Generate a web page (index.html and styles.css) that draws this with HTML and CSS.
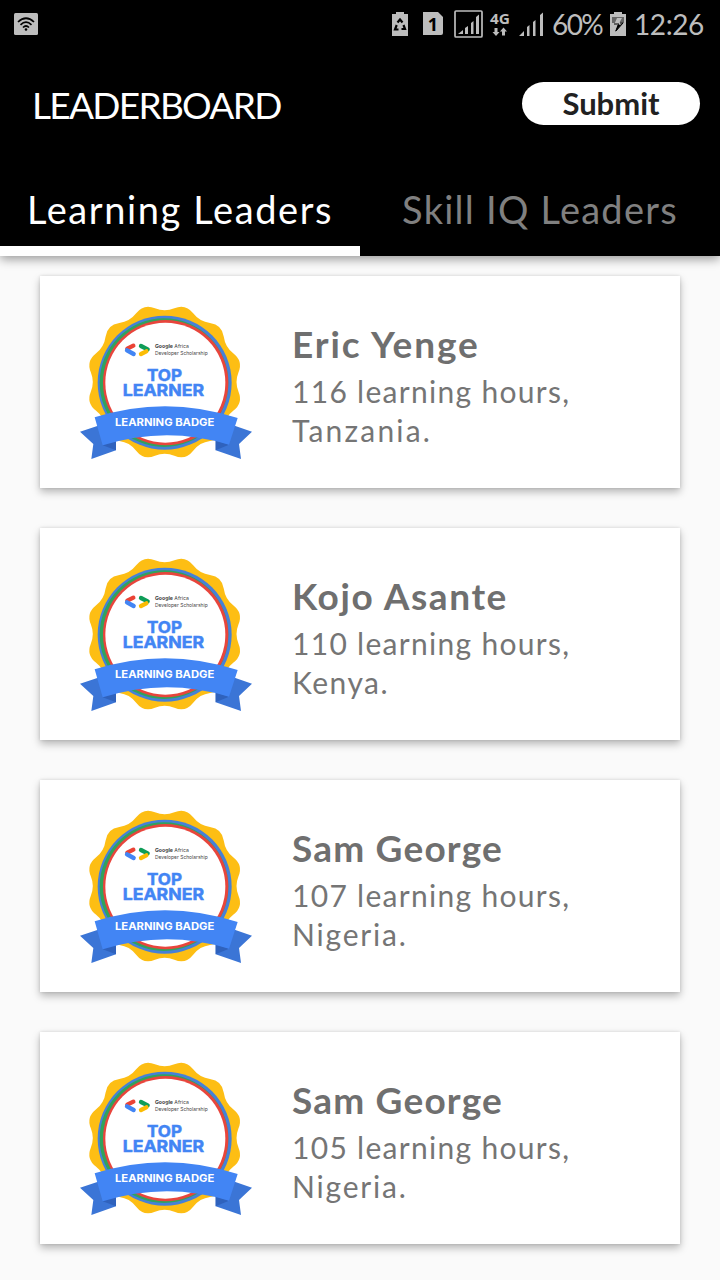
FILE: index.html
```html
<!DOCTYPE html>
<html lang="en">
<head>
<meta charset="utf-8">
<title>Leaderboard</title>
<link rel="stylesheet" href="styles.css">
</head>
<body>
<svg class="defs" aria-hidden="true">
  <symbol id="badge" viewBox="0 0 570 525">
    <path fill="#fdbe14" stroke="#fdbe14" stroke-width="9" stroke-linejoin="round" transform="translate(284 261)" d="M30.8-217.4Q61.6-230 82-203.7Q102.4-177.3 135.4-172.9Q168.4-168.4 172.9-135.4Q177.3-102.4 203.7-82Q230-61.6 217.4-30.8Q204.7 0 217.4 30.8Q230 61.6 203.7 82Q177.3 102.4 172.9 135.4Q168.4 168.4 135.4 172.9Q102.4 177.3 82 203.7Q61.6 230 30.8 217.4Q0 204.7-30.8 217.4Q-61.6 230-82 203.7Q-102.4 177.3-135.4 172.9Q-168.4 168.4-172.9 135.4Q-177.3 102.4-203.7 82Q-230 61.6-217.4 30.8Q-204.7 0-217.4-30.8Q-230-61.6-203.7-82Q-177.3-102.4-172.9-135.4Q-168.4-168.4-135.4-172.9Q-102.4-177.3-82-203.7Q-61.6-230-30.8-217.4Q0-204.7 30.8-217.4Z"/>
    <circle cx="284" cy="263" r="201" fill="#4680d8"/>
    <circle cx="282" cy="263" r="193" fill="#31a35c"/>
    <circle cx="287" cy="263" r="188" fill="#e8453c"/>
    <circle cx="286" cy="263" r="180" fill="#fff"/>
    <g fill="none" stroke-width="13" stroke-linecap="round">
      <path stroke="#ea4335" d="M172 161L190 152"/>
      <path stroke="#4285f4" d="M171 166L191 177"/>
      <path stroke="#0f9d58" d="M213 153L233 163"/>
      <path stroke="#fbbc04" d="M229 169L213 177"/>
    </g>
    <g fill="#444" font-family="Inter, sans-serif" font-size="15">
      <text x="255" y="160" textLength="102" lengthAdjust="spacingAndGlyphs"><tspan font-weight="700">Google</tspan> Africa</text>
      <text x="255" y="179" textLength="158" lengthAdjust="spacingAndGlyphs">Developer Scholarship</text>
    </g>
    <g fill="#4285f4" stroke="#4285f4" stroke-width="1.5" font-family="Inter, sans-serif" font-weight="700">
      <text x="231" y="259" font-size="48" textLength="105" lengthAdjust="spacingAndGlyphs">TOP</text>
      <text x="158" y="303" font-size="49" textLength="244" lengthAdjust="spacingAndGlyphs">LEARNER</text>
    </g>
    <path fill="#3b75d6" d="M30 410L84 392L138 436V466L64 492L70 447ZM546 410L494 392L437 436V466L513 492L507 447Z"/>
    <path fill="#2f62bd" d="M98 451L138 436V466ZM477 449L437 436V466Z"/>
    <path fill="#4285f4" d="M74 367Q288 299 503 369L477 449Q288 391 98 451Z"/>
    <text x="135" y="393" fill="#fff" font-family="Inter, sans-serif" font-weight="700" font-size="31" textLength="298" lengthAdjust="spacingAndGlyphs">LEARNING BADGE</text>
  </symbol>
</svg>

<header class="header">
  <div class="status">
    <svg class="status-wifi" width="24" height="22" viewBox="0 0 24 22"><rect width="24" height="22" rx="1.5" fill="#bdbdbd"/><g fill="none" stroke="#000" stroke-width="1.700"><path d="M4 9Q12 1.500 20 9M6.500 11.800Q12 6.500 17.500 11.800M9 14.500Q12 11.500 15 14.500"/></g><circle cx="12" cy="16.500" r="1.300"/></svg>
    <div class="status-right">
      <svg width="172" height="34" viewBox="388 8 172 34" fill="#bdbdbd">
        <path d="M392 14h4v-2h8v2h4v22h-16z"/>
        <g fill="none" stroke="#000" stroke-width="2.200"><path d="M397.500 22.500L400 19.500L402.500 22.500M403.500 25L405 29H401.500M398.500 29.500H395L396.700 25"/></g>
        <path d="M423 12h15l5 5v16q0 2-2 2h-18z"/>
        <text x="433" y="30.500" text-anchor="middle" font-family="Open Sans, sans-serif" font-weight="700" font-size="18" fill="#000">1</text>
        <rect x="455" y="11" width="27" height="26" rx="1" fill="none" stroke="#bdbdbd" stroke-width="1.700"/>
        <path d="M458 34l5-4v4zM465 28l3-2v8h-3zM471 23l2.500-2v13H471zM476 17l3-2.500V34h-3z"/>
        <text x="490" y="24" font-family="Open Sans, sans-serif" font-weight="700" font-size="14" textLength="20" lengthAdjust="spacingAndGlyphs">4G</text>
        <path d="M494.500 28h3v4h2l-3.500 4-3.500-4h2zM502 35.500h3v-4h2l-3.500-4-3.500 4h2z"/>
        <path d="M519 36l5-5v5zM527 27l2.500-2v11H527zM533 22l2.500-2v16H533zM540 15l3-2.500V36h-3z"/>
      </svg>
      <span class="status-percent">60%</span>
      <svg class="status-charge" width="16" height="24" viewBox="0 0 16 24"><path fill="#bdbdbd" d="M0 2h4V0h8v2h4v22H0z"/><path fill="#666" d="M2 5h12v6H2z"/><path d="M3.500 13H7.500l-2.500 7L13 11H9.500V13z" fill="#000"/><path fill="#bdbdbd" d="M7 6h5l-2.500 4.500H13L10 13H4z"/><path d="M4 12h5l-3 7 7-8h-3" fill="none" stroke="#000"/></svg>
      <span class="status-time">12:26</span>
    </div>
  </div>
  <div class="toolbar">
    <h1 class="title">LEADERBOARD</h1>
    <button class="submit">Submit</button>
  </div>
  <nav class="tabs">
    <a class="tab tab-active"><span class="tab-learning">Learning Leaders</span></a>
    <a class="tab"><span class="tab-skill">Skill IQ Leaders</span></a>
  </nav>
</header>

<main class="list">
  <article class="card">
    <svg class="badge" width="190" height="175"><use href="#badge"/></svg>
    <div class="info">
      <h2 class="name eric">Eric Yenge</h2>
      <p class="detail hours">116 learning hours,</p>
      <p class="detail tanzania">Tanzania.</p>
    </div>
  </article>
  <article class="card">
    <svg class="badge" width="190" height="175"><use href="#badge"/></svg>
    <div class="info">
      <h2 class="name kojo">Kojo Asante</h2>
      <p class="detail hours">110 learning hours,</p>
      <p class="detail kenya">Kenya.</p>
    </div>
  </article>
  <article class="card">
    <svg class="badge" width="190" height="175"><use href="#badge"/></svg>
    <div class="info">
      <h2 class="name sam">Sam George</h2>
      <p class="detail hours">107 learning hours,</p>
      <p class="detail nigeria">Nigeria.</p>
    </div>
  </article>
  <article class="card">
    <svg class="badge" width="190" height="175"><use href="#badge"/></svg>
    <div class="info">
      <h2 class="name sam">Sam George</h2>
      <p class="detail hours">105 learning hours,</p>
      <p class="detail nigeria">Nigeria.</p>
    </div>
  </article>
</main>
</body>
</html>
```
FILE: styles.css
```css
* { box-sizing: border-box; }
body {
  margin: 0;
  width: 720px;
  height: 1280px;
  overflow: hidden;
  background: #fafafa;
  font-family: Lato, "Open Sans", sans-serif;
}
h1, h2, p { margin: 0; white-space: nowrap; }
.defs { display: block; width: 0; height: 0; }

.header {
  height: 256px;
  background: #000;
  box-shadow: 0 3px 10px rgba(0, 0, 0, .4);
}
.status {
  display: flex;
  justify-content: space-between;
  height: 50px;
  padding: 8px 15px 0 14px;
  color: #bdbdbd;
}
.status-wifi { margin-top: 5px; }
.status-right { display: flex; line-height: 33px; font-size: 28px; white-space: nowrap; }
.status-percent { width: 50px; margin-left: -8px; letter-spacing: -1.6px; }
.status-charge { margin: 4px 8px 0 8px; }
.status-time { width: 71px; letter-spacing: -.4px; }

.toolbar {
  display: flex;
  justify-content: space-between;
  height: 120px;
  padding: 31px 20px 0 32px;
}
.title {
  color: #fff;
  font-size: 37px;
  font-weight: 400;
  line-height: 48px;
  letter-spacing: -1.7px;
}
.submit {
  width: 178px;
  height: 43px;
  margin-top: 1px;
  padding: 0;
  border: 0;
  border-radius: 22px;
  background: #fff;
  color: #212121;
  font: 700 31px/43px Lato, "Open Sans", sans-serif;
}

.tabs { display: grid; grid-template-columns: 1fr 1fr; height: 86px; }
.tab {
  padding-top: 14px;
  color: #808080;
  font-size: 38px;
  line-height: 50px;
  text-align: center;
  white-space: nowrap;
}
.tab-active { color: #fff; border-bottom: 10px solid #fff; }
.tab-learning { letter-spacing: 1.6px; }
.tab-skill { letter-spacing: 1.25px; }

.list {
  display: grid;
  gap: 40px;
  padding: 20px 40px 0;
}
.card {
  display: flex;
  height: 212px;
  padding: 19px 0 0 30px;
  background: #fff;
  box-shadow: 0 4px 8px rgba(0, 0, 0, .27), 0 0 3px rgba(0, 0, 0, .12);
}
.badge { flex: none; }
.info { padding: 22px 0 0 32px; color: #757575; }
.name { font-size: 37px; font-weight: 700; line-height: 54px; color: #6f6f6f; }
.detail { font-size: 30px; line-height: 38.5px; position: relative; top: 1px; }
.eric { letter-spacing: 1.9px; }
.kojo { letter-spacing: 1.6px; }
.sam { letter-spacing: 1.2px; }
.hours { letter-spacing: 1.3px; }
.tanzania { letter-spacing: 2.2px; }
.kenya { letter-spacing: 1.5px; }
.nigeria { letter-spacing: 1.8px; }
```
